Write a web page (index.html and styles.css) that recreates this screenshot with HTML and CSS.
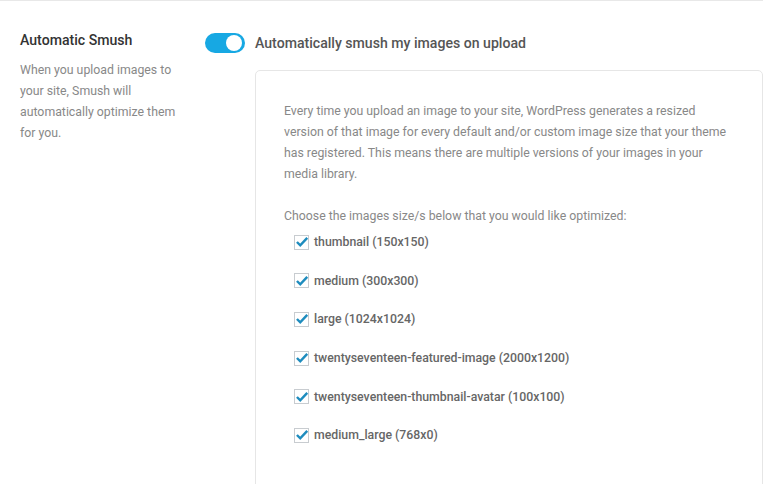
FILE: index.html
```html
<!DOCTYPE html>
<html lang="en">
<head>
  <meta charset="UTF-8">
  <meta name="viewport" content="width=device-width, initial-scale=1.0">
  <title>Smush Settings</title>
  <link rel="stylesheet" href="styles.css">
</head>
<body>
  <div class="settings-row">
    <div class="row-label">
      <h3>Automatic Smush</h3>
      <p>When you upload images to your site, Smush will automatically optimize them for you.</p>
    </div>
    <div class="row-content">
      <div class="toggle-line">
        <span class="toggle"><span class="knob"></span></span>
        <span class="toggle-label">Automatically smush my images on upload</span>
      </div>
      <div class="card">
        <p>Every time you upload an image to your site, WordPress generates a resized version of that image for every default and/or custom image size that your theme has registered. This means there are multiple versions of your images in your media library.</p>
        <p class="choose">Choose the images size/s below that you would like optimized:</p>
        <ul class="sizes">
          <li><span class="check"><svg viewBox="0 0 16 16"><path d="M2.2 8 L6 11.8 L14 3.2" /></svg></span>thumbnail (150x150)</li>
          <li><span class="check"><svg viewBox="0 0 16 16"><path d="M2.2 8 L6 11.8 L14 3.2" /></svg></span>medium (300x300)</li>
          <li><span class="check"><svg viewBox="0 0 16 16"><path d="M2.2 8 L6 11.8 L14 3.2" /></svg></span>large (1024x1024)</li>
          <li><span class="check"><svg viewBox="0 0 16 16"><path d="M2.2 8 L6 11.8 L14 3.2" /></svg></span>twentyseventeen-featured-image (2000x1200)</li>
          <li><span class="check"><svg viewBox="0 0 16 16"><path d="M2.2 8 L6 11.8 L14 3.2" /></svg></span>twentyseventeen-thumbnail-avatar (100x100)</li>
          <li><span class="check"><svg viewBox="0 0 16 16"><path d="M2.2 8 L6 11.8 L14 3.2" /></svg></span>medium_large (768x0)</li>
        </ul>
      </div>
    </div>
  </div>
</body>
</html>
```

FILE: styles.css
```css
body {
  font-family: Roboto, "Liberation Sans", sans-serif;
  background-color: #fff;
  margin: 0;
  padding: 0;
  border-top: 1px solid #e8e8e8;
  overflow: hidden;
}

.settings-row {
  display: flex;
  padding: 30px 0 0 20px;
}

.row-label {
  width: 185px;
  flex-shrink: 0;
}

.row-label h3 {
  margin: 0;
  font-size: 14.1px;
  font-weight: 500;
  line-height: 18px;
  color: #333;
}

.row-label p {
  margin: 11px 0 0;
  font-size: 12.3px;
  line-height: 21px;
  color: #888;
  padding-right: 20px;
}

.row-content {
  flex: 1;
  min-width: 0;
}

.toggle-line {
  display: flex;
  align-items: center;
  height: 24px;
}

.toggle {
  position: relative;
  width: 40px;
  height: 20px;
  border-radius: 10px;
  background-color: #17a8e3;
  margin-right: 10px;
}

.knob {
  position: absolute;
  top: 2px;
  right: 3px;
  width: 16px;
  height: 16px;
  border-radius: 50%;
  background-color: #fff;
}

.toggle-label {
  font-size: 14.1px;
  font-weight: 500;
  color: #555;
}

.card {
  margin: 15px 0 0 50px;
  border: 1px solid #e6e6e6;
  border-radius: 5px;
  padding: 30px 32px 40px 28px;
}

.card p {
  margin: 0;
  font-size: 12.3px;
  line-height: 21px;
  color: #888;
}

.card p.choose {
  margin-top: 21px;
}

.sizes {
  list-style: none;
  margin: -4px 0 0;
  padding: 0 0 0 10px;
}

.sizes li {
  display: flex;
  align-items: center;
  height: 38.6px;
  font-size: 12.3px;
  font-weight: 500;
  color: #666;
}

.check {
  width: 13px;
  height: 13px;
  border: 1px solid #c8ccd0;
  background-color: #fff;
  margin-right: 5px;
  display: flex;
  align-items: center;
  justify-content: center;
}

.check svg {
  width: 14px;
  height: 14px;
  flex-shrink: 0;
  fill: none;
  stroke: #1e8cbe;
  stroke-width: 2.8;
}
```
